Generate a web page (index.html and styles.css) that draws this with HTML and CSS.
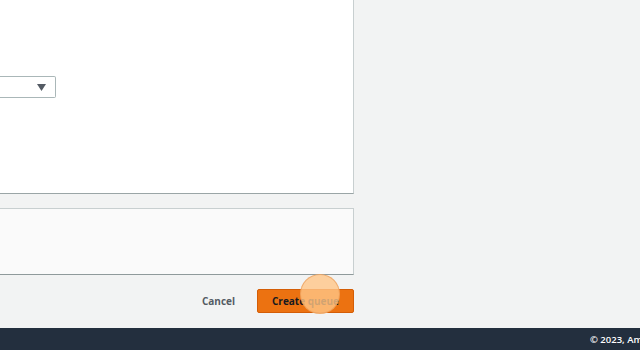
FILE: index.html
```html
<!DOCTYPE html>
<html>
<head>
<meta charset="utf-8">
<link rel="stylesheet" href="styles.css">
</head>
<body>
<div class="page">
  <main class="main">
    <section class="card">
      <div class="select">
        <span class="select-value"></span>
        <svg class="caret" width="9" height="7" viewBox="0 0 9 7"><path d="M0 0H9L4.5 7Z" fill="#545b64"/></svg>
      </div>
    </section>
    <section class="card card-muted"></section>
    <div class="actions">
      <button class="btn-link">Cancel</button>
      <button class="btn-primary">Create queue</button>
    </div>
  </main>
  <div class="click-mark"></div>
</div>
<footer class="footer"><span>© 2023, Amazon Web Services, Inc. or its affiliates.</span></footer>
</body>
</html>
```
FILE: styles.css
```css
html, body {
  margin: 0;
  padding: 0;
}
body {
  width: 640px;
  height: 350px;
  overflow: hidden;
  background: #f2f3f3;
  font-family: "Open Sans", "Noto Sans", sans-serif;
}
.page {
  position: relative;
  height: 328px;
}
.main {
  width: 356px;
  margin-left: -2px;
  display: flex;
  flex-direction: column;
}
.card {
  background: #ffffff;
  border: 1px solid #c8cfd0;
  border-top: none;
  border-bottom-color: #9aa5a6;
  padding-top: 76px;
  box-sizing: border-box;
  height: 194px;
}
.select {
  width: 57px;
  height: 22px;
  box-sizing: border-box;
  border: 1px solid #aab7b8;
  border-left: none;
  border-radius: 0 2px 2px 0;
  background: #fff;
  display: flex;
  align-items: center;
  justify-content: flex-end;
  padding-right: 9px;
}
.caret {
  display: block;
}
.card-muted {
  margin-top: 14px;
  height: 67px;
  padding: 0;
  background: #fafafa;
  border: 1px solid #c8cfd0;
  border-bottom-color: #8f9a9b;
}
.actions {
  display: flex;
  justify-content: flex-end;
  align-items: center;
  gap: 22px;
  margin-top: 14px;
}
.btn-link {
  border: none;
  background: none;
  font: inherit;
  font-size: 10px;
  font-weight: 700;
  color: #545b64;
  padding: 0;
}
.btn-primary {
  font: inherit;
  font-size: 10px;
  font-weight: 700;
  color: #16191f;
  background: #ec7211;
  border: 1px solid #d45d06;
  border-radius: 2px;
  width: 97px;
  height: 24px;
  padding: 0;
}
.click-mark {
  position: absolute;
  left: 300px;
  top: 274px;
  width: 40px;
  height: 40px;
  box-sizing: border-box;
  border-radius: 50%;
  background: rgba(255, 198, 135, 0.8);
  border: 1px solid rgba(230, 150, 80, 0.6);
}
.footer {
  height: 22px;
  background: #232f3e;
  display: flex;
  align-items: center;
  padding-left: 590px;
  white-space: nowrap;
  overflow: hidden;
  color: #ffffff;
  font-size: 9.5px;
  font-weight: 600;
}
```
